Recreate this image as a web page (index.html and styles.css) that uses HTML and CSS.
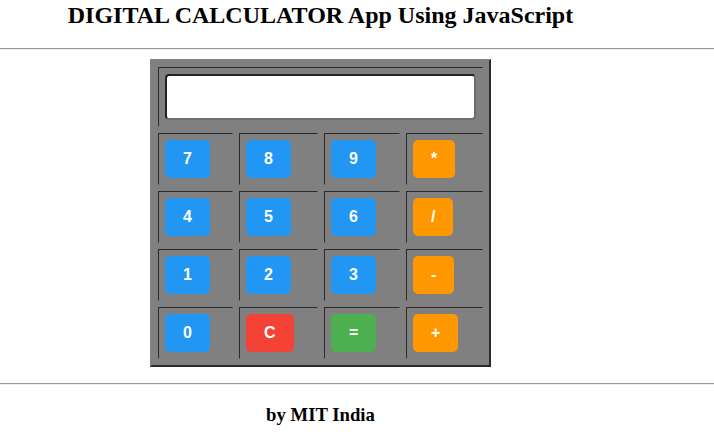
FILE: index.html
```html
<!DOCTYPE html>
<html>
<head>
<meta charset="utf-8">
<title>Digital Calculator</title>
<link rel="stylesheet" href="styles.css">
</head>
<body>
<div class="wrap">
  <h2 class="title">DIGITAL CALCULATOR App Using JavaScript</h2>
</div>
<hr class="rule rule-top">
<div class="wrap">
  <div class="calc">
    <div class="cell cell-display"><input class="display" type="text"></div>
    <div class="cell"><button class="key num">7</button></div>
    <div class="cell"><button class="key num">8</button></div>
    <div class="cell"><button class="key num">9</button></div>
    <div class="cell"><button class="key op">*</button></div>
    <div class="cell"><button class="key num">4</button></div>
    <div class="cell"><button class="key num">5</button></div>
    <div class="cell"><button class="key num">6</button></div>
    <div class="cell"><button class="key op">/</button></div>
    <div class="cell"><button class="key num">1</button></div>
    <div class="cell"><button class="key num">2</button></div>
    <div class="cell"><button class="key num">3</button></div>
    <div class="cell"><button class="key op">-</button></div>
    <div class="cell"><button class="key num">0</button></div>
    <div class="cell"><button class="key clear">C</button></div>
    <div class="cell"><button class="key equal">=</button></div>
    <div class="cell"><button class="key op">+</button></div>
  </div>
</div>
<hr class="rule rule-bottom">
<div class="wrap">
  <h3 class="byline">by MIT India</h3>
</div>
</body>
</html>
```

FILE: styles.css
```css
html, body {
  margin: 0;
  padding: 0;
  background: #ffffff;
}

body {
  font-family: "Liberation Serif", "Times New Roman", serif;
  color: #000;
  padding-top: 1px;
}

.wrap {
  width: 641px;
  text-align: center;
}

.title {
  margin: 0 0 19px;
  font-size: 24px;
  line-height: 28px;
  font-weight: bold;
}

.rule {
  margin: 0;
  height: 0;
  border: none;
  border-top: 1px solid #9a9a9a;
  border-bottom: 1px solid #eeeeee;
}

.calc {
  display: grid;
  grid-template-columns: 75px 79px 76px 77px;
  grid-template-rows: 60px 52px 52px 52px 52px;
  gap: 6px;
  padding: 6px;
  width: fit-content;
  margin: 9px auto 16px;
  background: #808080;
  border: 2px solid;
  border-color: #808080 #2a2a2a #2a2a2a #808080;
  text-align: left;
}

.cell {
  box-sizing: border-box;
  border: 1px solid;
  border-color: #2a2a2a #808080 #808080 #2a2a2a;
  padding: 6px;
}

.cell-display {
  grid-column: 1 / -1;
}

.display {
  display: block;
  box-sizing: border-box;
  width: 100%;
  height: 46px;
  margin: 0;
  padding: 0 6px;
  background: #ffffff;
  border: 2px solid;
  border-color: #222222 #6e6e6e #6e6e6e #222222;
  border-radius: 4px;
  font-family: "Liberation Sans", Arial, sans-serif;
  font-size: 18px;
}

.key {
  display: block;
  height: 38px;
  margin: 0;
  padding: 0 18px;
  border: none;
  border-radius: 5px;
  color: #ffffff;
  font-family: "Liberation Sans", Arial, sans-serif;
  font-size: 16px;
  font-weight: bold;
  cursor: pointer;
}

.num { background: #2196f3; }
.op { background: #ff9800; }
.clear { background: #f44336; }
.equal { background: #4caf50; }

.byline {
  margin: 19px 0 0;
  font-size: 18.72px;
  font-weight: bold;
}
```
